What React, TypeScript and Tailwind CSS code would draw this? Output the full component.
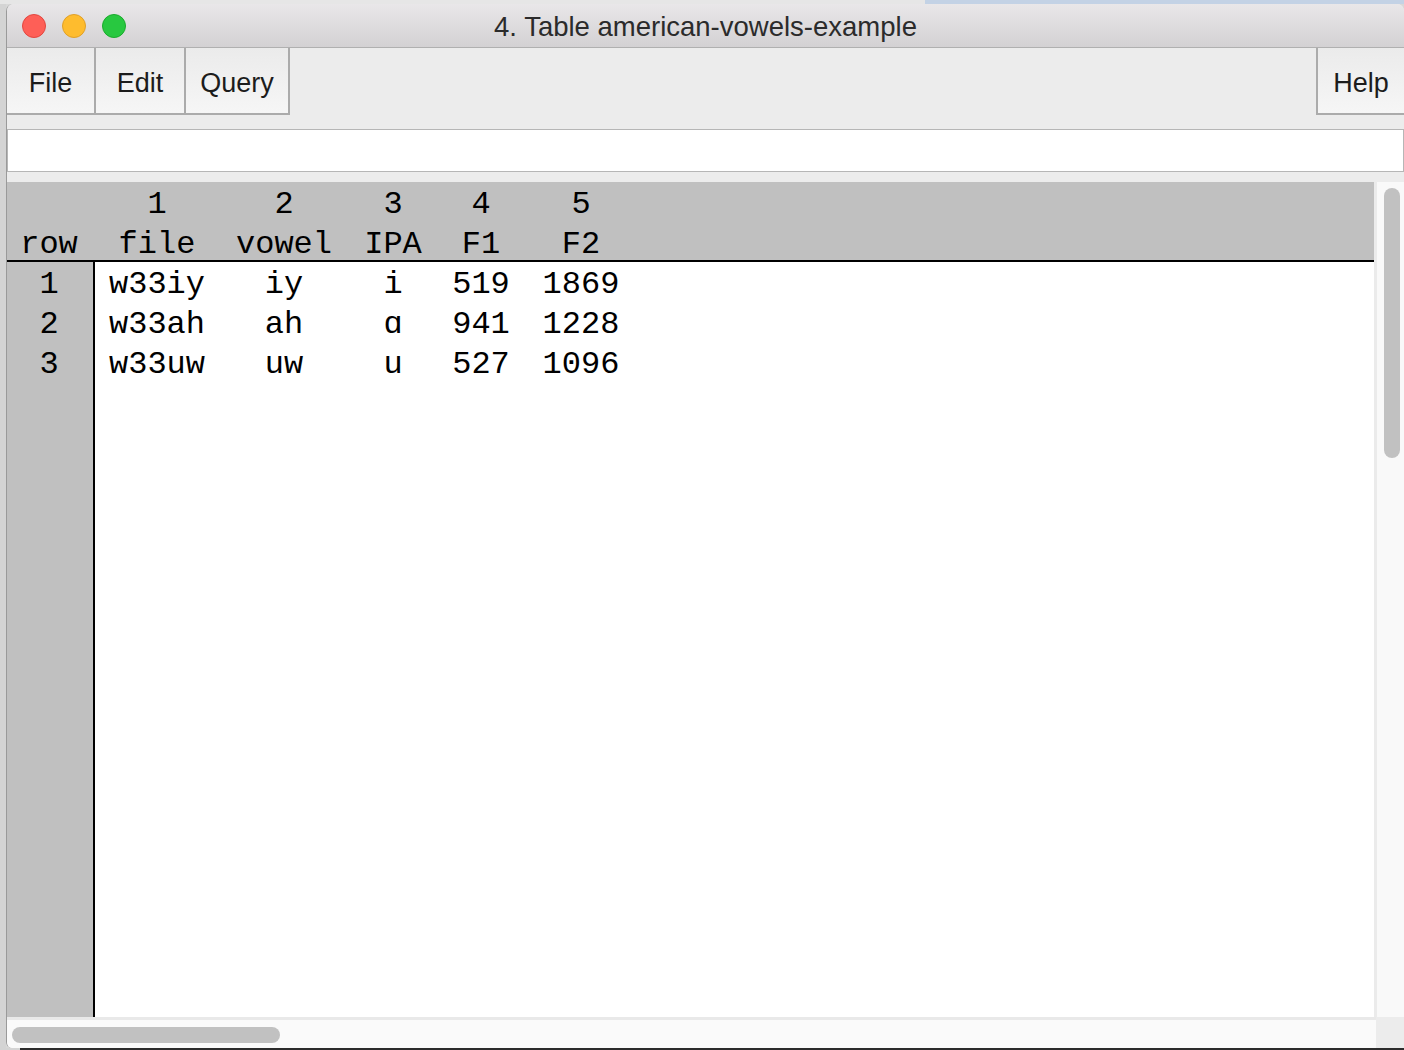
import React from "react";

const mono = { fontFamily: '"Liberation Mono", "DejaVu Sans Mono", monospace' };
const sans = { fontFamily: '"Liberation Sans", Arial, sans-serif' };

// column widths follow the centres of the reference (157, 284, 393, 481, 581)
const cols = [
  { num: "1", name: "file", w: "w-[124px]" },
  { num: "2", name: "vowel", w: "w-[130px]" },
  { num: "3", name: "IPA", w: "w-[88px]" },
  { num: "4", name: "F1", w: "w-[88px]" },
  { num: "5", name: "F2", w: "w-[112px]" },
];

const rows = [
  ["1", "w33iy", "iy", "i", "519", "1869"],
  ["2", "w33ah", "ah", "ɑ", "941", "1228"],
  ["3", "w33uw", "uw", "u", "527", "1096"],
];

const MenuButton = ({ label, w, side }: { label: string; w: string; side: "r" | "l" }) => (
  <div
    className={`${w} h-[67px] flex items-center justify-center pt-[5px] text-[27px] text-[#1c1c1c] bg-gradient-to-b from-[#ebebeb] to-[#f6f6f6] border-b-2 border-[#ababab] ${
      side === "r" ? "border-r-2" : "border-l-2"
    }`}
  >
    {label}
  </div>
);

export default function App() {
  return (
    <div className="w-[1404px] h-[1050px] flex flex-col bg-[#d8d8d8] overflow-hidden" style={sans}>
      {/* desktop strip above the window */}
      <div className="h-[4px] flex shrink-0">
        <div className="w-[925px] bg-[#e6e6e6]" />
        <div className="flex-1 bg-[#c3d2e5]" />
      </div>

      <div className="flex flex-1 min-h-0">
        <div className="w-[6px] shrink-0 bg-[#d4d4d4]" />

        {/* window */}
        <div className="flex-1 flex flex-col bg-[#ececec] rounded-t-[7px] rounded-bl-[6px] border-l border-[#9a9a9a] overflow-hidden">
          {/* title bar */}
          <div className="h-[44px] shrink-0 grid grid-cols-[1fr_auto_1fr] items-center bg-gradient-to-b from-[#e9e7e9] to-[#d3d1d3] border-b border-[#b0b0b0]">
            <div className="flex items-center gap-[16px] pl-[15px]">
              <span className="w-[24px] h-[24px] rounded-full bg-[#fe5f57] border border-[#e2463f]" />
              <span className="w-[24px] h-[24px] rounded-full bg-[#febc2e] border border-[#e0a028]" />
              <span className="w-[24px] h-[24px] rounded-full bg-[#28c840] border border-[#1aab2c]" />
            </div>
            <div className="text-[27.5px] text-[#2b2b2b] leading-none pt-[3px]">4. Table american-vowels-example</div>
            <div />
          </div>

          {/* menu bar */}
          <div className="flex shrink-0">
            <MenuButton label="File" w="w-[89px]" side="r" />
            <MenuButton label="Edit" w="w-[90px]" side="r" />
            <MenuButton label="Query" w="w-[104px]" side="r" />
            <div className="flex-1" />
            <MenuButton label="Help" w="w-[88px]" side="l" />
          </div>

          {/* text field */}
          <div className="pt-[14px] pb-[10px] shrink-0">
            <div className="h-[43px] bg-white border border-[#b6b6b6]" />
          </div>

          {/* table + vertical scrollbar */}
          <div className="flex flex-1 min-h-0" style={mono}>
            <div className="flex-1 flex flex-col bg-white text-[32px] leading-[40px] text-black">
              <div className="bg-[#c0c0c0] border-b-2 border-black shrink-0">
                <div className="flex h-[40px] pt-[3px]">
                  <div className="w-[88px]" />
                  {cols.map((c) => (
                    <div key={c.num} className={`${c.w} text-center`}>
                      {c.num}
                    </div>
                  ))}
                </div>
                <div className="flex h-[38px] pt-[3px]">
                  <div className="w-[84px] text-center">row</div>
                  {cols.map((c, i) => (
                    <div key={c.name} className={`${c.w} text-center ${i === 0 ? "ml-[4px]" : ""}`}>
                      {c.name}
                    </div>
                  ))}
                </div>
              </div>
              <div className="flex-1 flex">
                <div className="w-[88px] bg-[#c0c0c0] border-r-2 border-black shrink-0">
                  {rows.map((r) => (
                    <div key={r[0]} className="h-[40px] pt-[3px] pr-[2px] text-center">
                      {r[0]}
                    </div>
                  ))}
                </div>
                <div>
                  {rows.map((r) => (
                    <div key={r[0]} className="flex h-[40px] pt-[3px]">
                      {cols.map((c) => (
                        <div key={c.num} className={`${c.w} text-center`}>
                          {r[cols.indexOf(c) + 1]}
                        </div>
                      ))}
                    </div>
                  ))}
                </div>
              </div>
            </div>

            <div className="w-[30px] shrink-0 bg-[#f9f9f9] border-l-[3px] border-[#ebebeb] pt-[6px] pl-[7px]">
              <div className="w-[16px] h-[270px] rounded-full bg-[#c1c1c1]" />
            </div>
          </div>

          {/* horizontal scrollbar */}
          <div className="h-[31px] shrink-0 flex">
            <div className="flex-1 bg-[#fafafa] border-t-[3px] border-[#e9e9e9] pt-[7px] pl-[5px]">
              <div className="w-[268px] h-[16px] rounded-full bg-[#c1c1c1]" />
            </div>
            <div className="w-[28px] bg-[#ececec]" />
          </div>
        </div>
      </div>

      <div className="h-[2px] shrink-0 flex">
        <div className="w-[20px] bg-[#d4d4d4]" />
        <div className="flex-1 bg-[#2c2c2c]" />
      </div>
    </div>
  );
}
